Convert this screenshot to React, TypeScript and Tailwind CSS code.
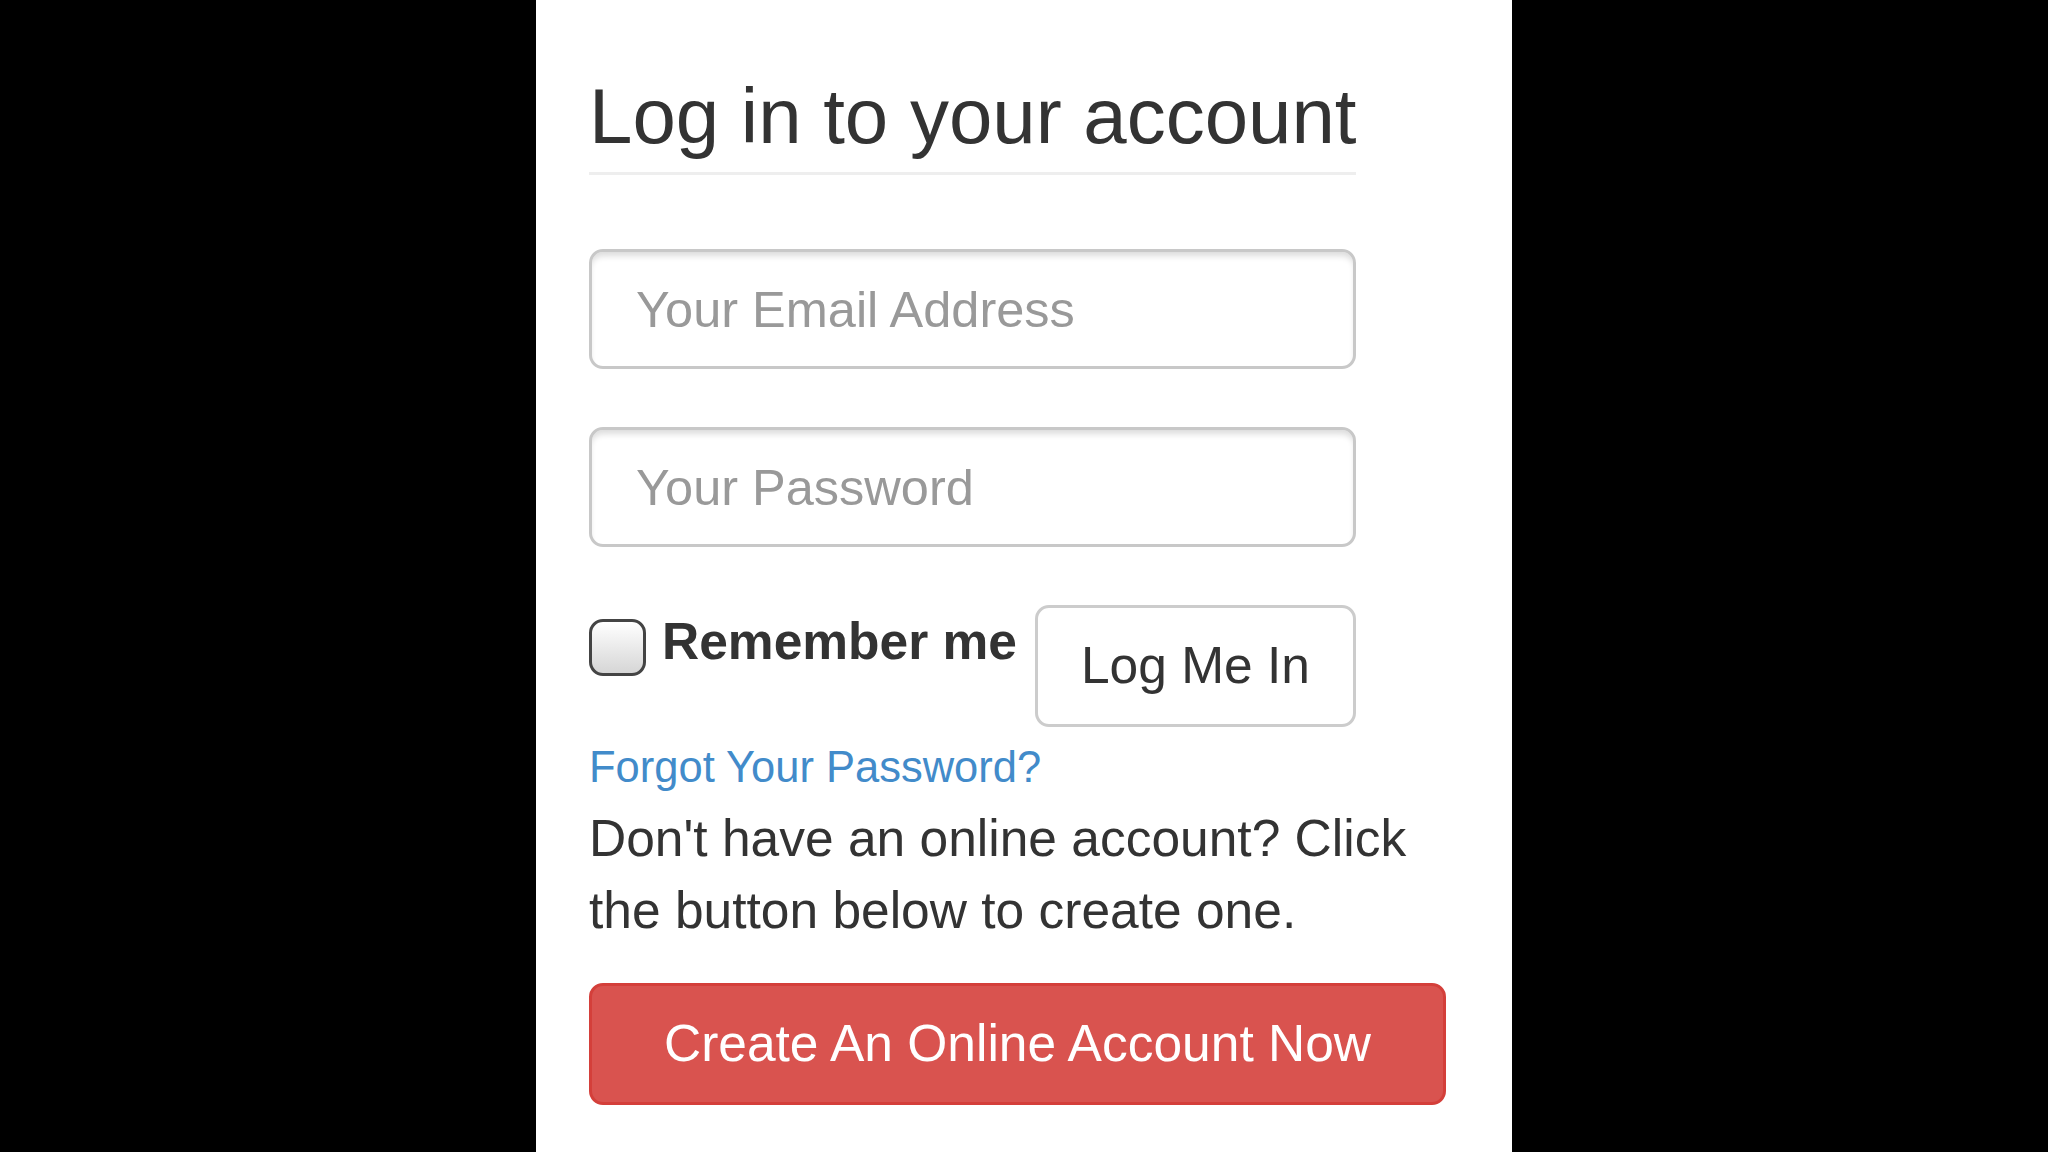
import { useState } from 'react';

const App = () => {
  const [remember, setRemember] = useState(false);

  return (
    <div className="min-h-screen bg-black flex justify-center font-['Liberation_Sans',Arial,sans-serif] text-[#333]">
      <div className="w-[976px] h-[1152px] bg-white pl-[53px]">
        {/* Heading */}
        <div className="w-[767px] pt-[73px] pb-[13px] border-b-[3px] border-[#eee]">
          <h2 className="text-[78px] leading-[86px] font-normal whitespace-nowrap">Log in to your account</h2>
        </div>

        {/* Fields */}
        <form className="w-[767px] mt-[74px] flex flex-col gap-[58px]" onSubmit={(e) => e.preventDefault()}>
          <input
            type="email"
            placeholder="Your Email Address"
            className="h-[120px] w-full border-[3px] border-[#c8c8c8] rounded-[14px] pl-[44px] text-[50.5px] bg-white shadow-[inset_0_6px_6px_-2px_rgba(0,0,0,0.14)] placeholder:text-[#999] outline-none"
          />
          <input
            type="password"
            placeholder="Your Password"
            className="h-[120px] w-full border-[3px] border-[#c8c8c8] rounded-[14px] pl-[44px] text-[50.5px] bg-white shadow-[inset_0_6px_6px_-2px_rgba(0,0,0,0.14)] placeholder:text-[#999] outline-none"
          />

          <div className="flex items-start">
            <label className="flex items-start cursor-pointer">
              <span
                onClick={() => setRemember(!remember)}
                className="mt-[14px] w-[57px] h-[57px] rounded-[14px] border-[3px] border-[#444] bg-linear-to-b from-white to-[#d6d6d6] flex items-center justify-center text-[36px] leading-none"
              >
                {remember ? '✓' : ''}
              </span>
              <span className="ml-[16px] mt-[6px] text-[51.5px] leading-[60px] font-bold whitespace-nowrap">Remember me</span>
            </label>
            <button
              type="submit"
              className="ml-auto w-[321px] h-[122px] border-[3px] border-[#ccc] rounded-[14px] bg-white text-[51.5px] flex items-center justify-center"
            >
              Log Me In
            </button>
          </div>
        </form>

        <a href="#" className="block mt-[11px] text-[43.5px] leading-[58px] text-[#428bca]">
          Forgot Your Password?
        </a>

        <p className="w-[857px] mt-[6px] text-[51.5px] leading-[72px]">
          Don't have an online account? Click the button below to create one.
        </p>

        <button className="mt-[37px] w-[857px] h-[122px] rounded-[14px] bg-[#d9534f] border-[3px] border-[#d43f3a] text-white text-[51.5px] flex items-center justify-center">
          Create An Online Account Now
        </button>
      </div>
    </div>
  );
};

export default App;
